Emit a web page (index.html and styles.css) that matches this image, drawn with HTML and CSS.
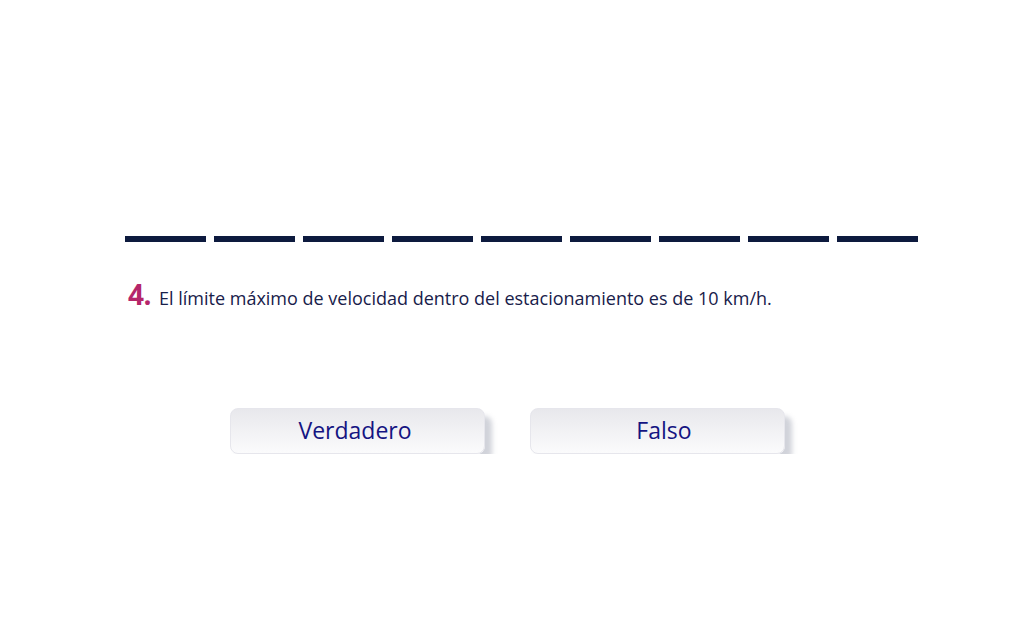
FILE: index.html
```html
<!DOCTYPE html>
<html lang="es">
<head>
    <meta charset="UTF-8">
    <title>Pregunta 4</title>
    <meta name="viewport" content="width=device-width, initial-scale=1.0">
    <link rel="stylesheet" href="styles.css">
</head>
<body>
    <main class="quiz">
        <div class="progress">
            <span class="dash"></span>
            <span class="dash"></span>
            <span class="dash"></span>
            <span class="dash"></span>
            <span class="dash"></span>
            <span class="dash"></span>
            <span class="dash"></span>
            <span class="dash"></span>
            <span class="dash"></span>
        </div>
        <div class="question">
            <span class="number">4.</span>
            <p class="text">El límite máximo de velocidad dentro del estacionamiento es de 10 km/h.</p>
        </div>
        <div class="answers">
            <button class="answer answer-true">Verdadero</button>
            <button class="answer answer-false">Falso</button>
        </div>
    </main>
</body>
</html>
```

FILE: styles.css
```css
body {
    margin: 0;
    background: #fff;
    font-family: "Open Sans", "Noto Sans", Arial, sans-serif;
}
.quiz {
    padding: 236px 0 0 125px;
    width: 793px;
}
.progress {
    display: flex;
    gap: 8px;
}
.dash {
    flex: 1;
    height: 6px;
    background: #0d1a3e;
}
.question {
    display: flex;
    align-items: baseline;
    margin-top: 33px;
    padding-left: 3px;
}
.number {
    font-size: 28px;
    font-weight: 700;
    color: #b5266a;
    margin-right: 8px;
    letter-spacing: -0.5px;
}
.text {
    margin: 0;
    font-size: 18px;
    color: #18204a;
}
.answers {
    display: flex;
    gap: 45px;
    margin-top: 95px;
    padding-left: 105px;
}
.answer {
    width: 255px;
    height: 46px;
    border: 1px solid #e6e6ec;
    border-radius: 8px;
    background: linear-gradient(#e8e8ec, #fbfbfc);
    box-shadow: 7px 8px 5px rgba(190, 192, 202, 0.7);
    font-family: "Open Sans", "Noto Sans", Arial, sans-serif;
    font-size: 23px;
    color: #141482;
    padding: 0 0 2px 0;
}
.answer-true {
    padding-right: 5px;
}
.answer-false {
    padding-left: 13px;
}
```
